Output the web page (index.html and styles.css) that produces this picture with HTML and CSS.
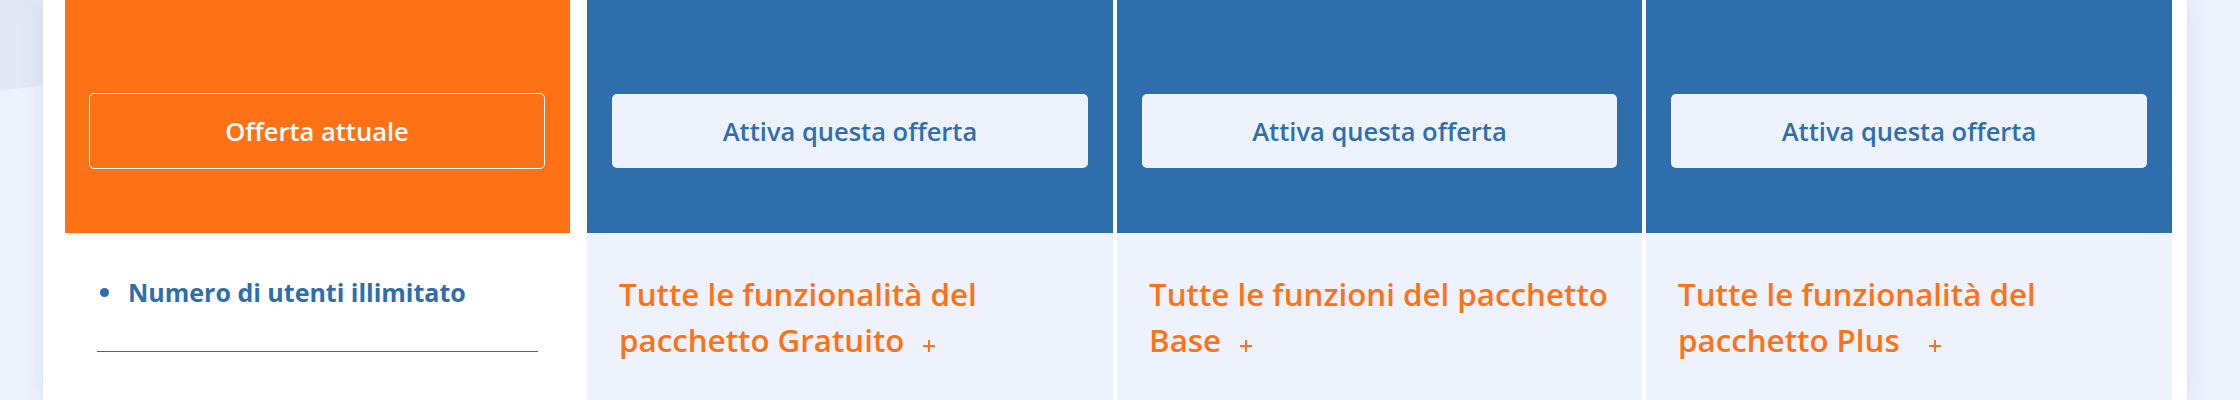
FILE: index.html
```html
<!DOCTYPE html>
<html lang="it">
<head>
    <meta charset="UTF-8">
    <meta name="viewport" content="width=device-width, initial-scale=1.0">
    <title>Offerte</title>
    <link rel="stylesheet" href="styles.css">
</head>
<body>
    <div class="page">
        <div class="backdrop"></div>
        <div class="card">
            <div class="plans">
                <div class="plan plan-current">
                    <div class="plan-head">
                        <button class="btn btn-current">Offerta attuale</button>
                    </div>
                    <div class="plan-body">
                        <ul class="features">
                            <li>Numero di utenti illimitato</li>
                        </ul>
                        <div class="divider"></div>
                    </div>
                </div>

                <div class="plan">
                    <div class="plan-head">
                        <button class="btn btn-activate">Attiva questa offerta</button>
                    </div>
                    <div class="plan-body">
                        <p class="includes">Tutte le funzionalità del<br>pacchetto Gratuito<span class="more"><svg viewBox="0 0 14 14" width="14" height="14"><path d="M7 1v12M1 7h12" stroke="currentColor" stroke-width="2"/></svg></span></p>
                    </div>
                </div>

                <div class="plan">
                    <div class="plan-head">
                        <button class="btn btn-activate">Attiva questa offerta</button>
                    </div>
                    <div class="plan-body">
                        <p class="includes">Tutte le funzioni del pacchetto<br>Base<span class="more"><svg viewBox="0 0 14 14" width="14" height="14"><path d="M7 1v12M1 7h12" stroke="currentColor" stroke-width="2"/></svg></span></p>
                    </div>
                </div>

                <div class="plan">
                    <div class="plan-head">
                        <button class="btn btn-activate">Attiva questa offerta</button>
                    </div>
                    <div class="plan-body">
                        <p class="includes">Tutte le funzionalità del<br>pacchetto Plus<span class="more more-wide"><svg viewBox="0 0 14 14" width="14" height="14"><path d="M7 1v12M1 7h12" stroke="currentColor" stroke-width="2"/></svg></span></p>
                    </div>
                </div>
            </div>
        </div>
    </div>
</body>
</html>
```

FILE: styles.css
```css
body {
    margin: 0;
    font-family: "Open Sans", Arial, sans-serif;
    background-color: #eef2fc;
    overflow: hidden;
}
.page {
    display: flex;
    height: 400px;
}
.backdrop {
    width: 43px;
    flex-shrink: 0;
    background: linear-gradient(173.4deg, #e2e9f5 90px, #eef2fc 90px);
}
.card {
    width: 2144px;
    flex-shrink: 0;
    padding: 0 15px 0 22px;
    box-sizing: border-box;
    background-color: #fff;
    box-shadow: 0 0 22px rgba(40, 90, 210, 0.12);
}
.plans {
    display: grid;
    grid-template-columns: 518px 526px 525px 526px;
    column-gap: 4px;
    height: 100%;
}
.plan {
    display: flex;
    flex-direction: column;
}
.plan-current {
    margin-right: 13px;
}
.plan-head {
    height: 233px;
    padding: 93px 25px 0;
    box-sizing: border-box;
    background-color: #2e6ead;
}
.plan-current .plan-head {
    padding: 93px 25px 0 24px;
    background-color: #fe7115;
}
.plan-body {
    flex: 1;
    background-color: #eef2fc;
}
.plan-current .plan-body {
    background-color: #fff;
}
.btn {
    display: block;
    width: 100%;
    font-family: inherit;
    font-size: 25.5px;
    font-weight: 600;
    border-radius: 5px;
    box-sizing: border-box;
    cursor: pointer;
}
.btn-current {
    height: 76px;
    border: 1px solid #fff;
    background-color: transparent;
    color: #fff;
}
.btn-activate {
    height: 74px;
    margin-top: 1px;
    border: none;
    background-color: #eef2fc;
    color: #2e6ead;
}
.features {
    list-style: none;
    margin: 0;
    padding: 42px 0 0 63px;
}
.features li {
    position: relative;
    font-size: 25px;
    line-height: 34px;
    font-weight: 700;
    color: #2e6ead;
}
.features li::before {
    content: "";
    position: absolute;
    left: -28px;
    top: 13px;
    width: 9px;
    height: 9px;
    border-radius: 50%;
    background-color: #2e6ead;
}
.divider {
    height: 1px;
    margin: 42px 32px 0;
    background-color: #2e6ead;
}
.includes {
    margin: 0;
    padding: 38px 32px 0;
    font-size: 31.3px;
    line-height: 46px;
    font-weight: 600;
    color: #ff7215;
}
.more {
    display: inline-block;
    margin-left: 18px;
    vertical-align: -1px;
    line-height: 0;
}
.more-wide {
    margin-left: 28px;
}
```
